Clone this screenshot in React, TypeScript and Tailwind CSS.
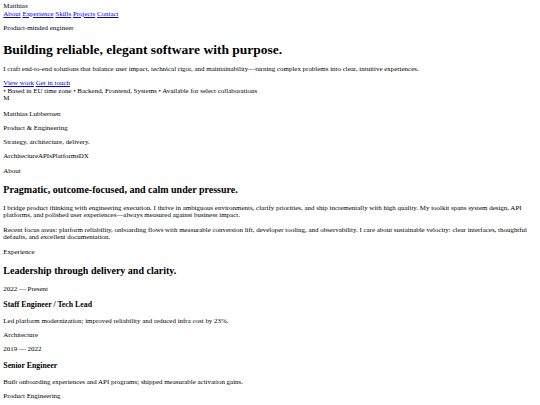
import React from "react";

const P = ({ children, className = "" }: { children: React.ReactNode; className?: string }) => (
  <p className={`my-[6.64px] leading-[7.64px] ${className}`}>{children}</p>
);

const A = ({ href, children }: { href: string; children: React.ReactNode }) => (
  <a href={href} className="text-[#0000ee] underline">{children}</a>
);

export default function App() {
  return (
    <div className="bg-white text-black p-[3.32px] text-[6.95px] leading-[7.64px] min-h-[405px]" style={{ fontFamily: '"Liberation Serif", "Times New Roman", serif' }}>
      <div>Matthias</div>
      <nav>
        <A href="#about">About</A>{" "}
        <A href="#experience">Experience</A>{" "}
        <A href="#skills">Skills</A>{" "}
        <A href="#projects">Projects</A>{" "}
        <A href="#contact">Contact</A>
      </nav>
      <P>Product-minded engineer</P>
      <h1 className="text-[13.5px] font-bold my-[8.9px] leading-[15.26px]">Building reliable, elegant software with purpose.</h1>
      <P>I craft end-to-end solutions that balance user impact, technical rigor, and maintainability—turning complex problems into clear, intuitive experiences.</P>
      <div>
        <A href="#work">View work</A>{" "}
        <A href="#contact">Get in touch</A>
      </div>
      <div>• Based in EU time zone • Backend, Frontend, Systems • Available for select collaborations</div>
      <div>M</div>
      <P className="mt-[7.6px]">Matthias Lubbertsen</P>
      <P>Product &amp; Engineering</P>
      <P>Strategy, architecture, delivery.</P>
      <P><span>Architecture</span><span>APIs</span><span>Platforms</span><span>DX</span></P>
      <P>About</P>
      <h2 className="text-[10px] font-bold my-[9px] leading-[11.44px]">Pragmatic, outcome-focused, and calm under pressure.</h2>
      <P>I bridge product thinking with engineering execution. I thrive in ambiguous environments, clarify priorities, and ship incrementally with high quality. My toolkit spans system design, API platforms, and polished user experiences—always measured against business impact.</P>
      <P>Recent focus areas: platform reliability, onboarding flows with measurable conversion lift, developer tooling, and observability. I care about sustainable velocity: clear interfaces, thoughtful defaults, and excellent documentation.</P>
      <P>Experience</P>
      <h2 className="text-[10px] font-bold my-[9px] leading-[11.44px]">Leadership through delivery and clarity.</h2>
      <P>2022 — Present</P>
      <h3 className="text-[7.8px] font-bold mt-[7.77px] mb-[7.9px] leading-[8.93px]">Staff Engineer / Tech Lead</h3>
      <P>Led platform modernization; improved reliability and reduced infra cost by 23%.</P>
      <P>Architecture</P>
      <P>2019 — 2022</P>
      <h3 className="text-[7.8px] font-bold mt-[7.77px] mb-[7.9px] leading-[8.93px]">Senior Engineer</h3>
      <P>Built onboarding experiences and API programs; shipped measurable activation gains.</P>
      <P>Product Engineering</P>
    </div>
  );
}
